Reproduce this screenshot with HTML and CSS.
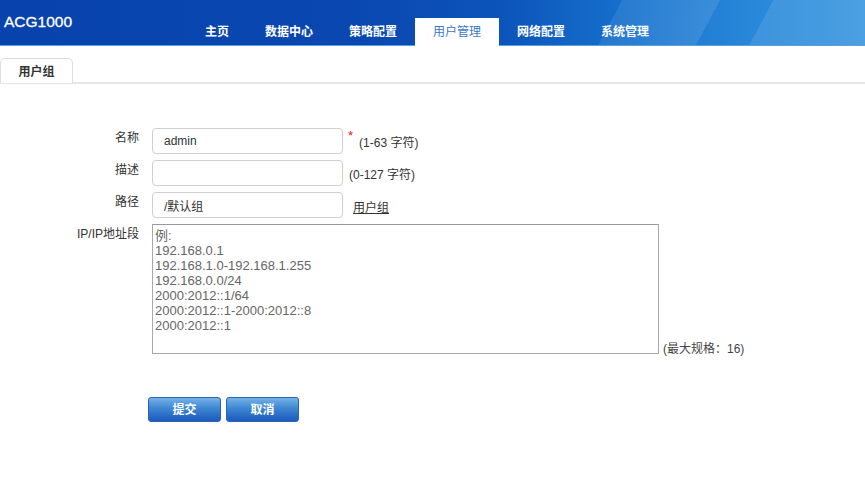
FILE: index.html
```html
<!DOCTYPE html>
<html lang="zh-CN">
<head>
<meta charset="utf-8">
<title>ACG1000</title>
<link rel="stylesheet" href="styles.css">
</head>
<body>
<header class="topbar">
  <div class="logo">ACG1000</div>
  <nav class="mainnav">
    <a class="nav-item">主页</a>
    <a class="nav-item">数据中心</a>
    <a class="nav-item">策略配置</a>
    <a class="nav-item active">用户管理</a>
    <a class="nav-item">网络配置</a>
    <a class="nav-item">系统管理</a>
  </nav>
</header>
<div class="tabbar">
  <div class="tab">用户组</div>
</div>
<main class="content">
  <form class="form">
    <div class="row">
      <label class="label">名称</label>
      <div class="field">
        <input class="input" type="text" value="admin">
        <span class="req">*</span>
        <span class="hint">(1-63 字符)</span>
      </div>
    </div>
    <div class="row">
      <label class="label">描述</label>
      <div class="field">
        <input class="input" type="text" value="">
        <span class="hint hint-gap">(0-127 字符)</span>
      </div>
    </div>
    <div class="row">
      <label class="label">路径</label>
      <div class="field">
        <input class="input" type="text" value="/默认组">
        <a class="link">用户组</a>
      </div>
    </div>
    <div class="row">
      <label class="label">IP/IP地址段</label>
      <div class="field field-bottom">
        <textarea class="area" placeholder="例:
192.168.0.1
192.168.1.0-192.168.1.255
192.168.0.0/24
2000:2012::1/64
2000:2012::1-2000:2012::8
2000:2012::1"></textarea>
        <span class="hint hint-max">(最大规格：16)</span>
      </div>
    </div>
    <div class="actions">
      <button type="button" class="btn">提交</button>
      <button type="button" class="btn">取消</button>
    </div>
  </form>
</main>
</body>
</html>
```
FILE: styles.css
```css
html, body {
  margin: 0;
  padding: 0;
  background: #ffffff;
  font-family: "Liberation Sans", "Noto Sans CJK SC", sans-serif;
  font-size: 12px;
  color: #333;
}

.topbar {
  height: 46px;
  display: flex;
  align-items: flex-end;
  background:
    linear-gradient(118deg, rgba(255,255,255,0) 0%, rgba(255,255,255,0) 70%, rgba(255,255,255,0.08) 70%, rgba(255,255,255,0.10) 81%, rgba(255,255,255,0) 81%, rgba(255,255,255,0) 87%, rgba(255,255,255,0.10) 87%),
    linear-gradient(90deg, #0843ad 0%, #0a47b0 40%, #0c54ba 58%, #1670cd 72%, #2786d8 86%, #3595de 100%);
  border-bottom: 1px solid #5aa0df;
  box-sizing: border-box;
}

.logo {
  align-self: flex-start;
  margin: 13px 0 0 4px;
  font-size: 15.5px;
  color: #fff;
  width: 183px;
  -webkit-text-stroke: 0.3px #fff;
}

.mainnav {
  display: flex;
  align-items: flex-end;
}

.nav-item {
  display: block;
  height: 27px;
  line-height: 28px;
  padding: 0 18px;
  color: #fff;
  font-size: 12px;
  font-weight: bold;
  cursor: pointer;
}

.nav-item.active {
  background: #fff;
  color: #3a78c8;
  font-weight: normal;
  padding: 0 18px;
  height: 28px;
  margin-bottom: -1px;
}

.tabbar {
  border-bottom: 2px solid #e6e6e6;
  display: flex;
  align-items: flex-end;
  box-sizing: border-box;
  height: 38px;
}

.tab {
  width: 71px;
  height: 24px;
  line-height: 27px;
  text-align: center;
  border: 1px solid #dcdcdc;
  border-bottom: none;
  border-radius: 5px 5px 0 0;
  font-weight: bold;
  color: #333;
  background: #fff;
  margin-bottom: -1px;
}

.content {
  padding-top: 44px;
}

.form {
  display: flex;
  flex-direction: column;
  gap: 6px;
}

.row {
  display: flex;
  align-items: flex-start;
}

.label {
  text-align: right;
  line-height: 20px;
  padding-right: 13px;
  box-sizing: border-box;
  width: 152px;
  color: #333;
}

.field {
  display: flex;
  align-items: center;
}

.field-bottom {
  align-items: flex-end;
}

.input {
  width: 191px;
  height: 26px;
  box-sizing: border-box;
  border: 1px solid #cfcfcf;
  border-radius: 4px;
  padding: 0 11px;
  font-family: "Liberation Sans", "Noto Sans CJK SC", sans-serif;
  font-size: 12px;
  color: #333;
  outline: none;
}

.req {
  color: #e02020;
  font-size: 13px;
  margin-left: 5px;
  align-self: flex-start;
  line-height: 16px;
}

.hint {
  color: #333;
  margin-left: 6px;
  font-size: 12px;
}

.hint-gap {
  margin-left: 6px;
}

.link {
  margin-left: 10px;
  color: #333;
  text-decoration: underline;
  cursor: pointer;
  margin-top: 2px;
}

.area {
  width: 507px;
  height: 130px;
  box-sizing: border-box;
  border: 1px solid #a9a9a9;
  border-top-color: #999;
  padding: 3px 2px;
  font-family: "Liberation Sans", "Noto Sans CJK SC", sans-serif;
  font-size: 13px;
  line-height: 15px;
  resize: none;
  outline: none;
  margin: 0;
  display: block;
}

.area::placeholder {
  color: #666;
  opacity: 1;
}

.hint-max {
  margin-left: 4px;
  line-height: 14px;
  margin-bottom: -2px;
  color: #444;
}

.actions {
  display: flex;
  gap: 5px;
  padding-left: 148px;
  margin-top: 37px;
}

.btn {
  width: 73px;
  height: 25px;
  border: 1px solid #2a62b8;
  border-radius: 3px;
  background: linear-gradient(#75b2e6 0%, #3d86d2 45%, #1d5abd 100%);
  color: #fff;
  font-family: "Liberation Sans", "Noto Sans CJK SC", sans-serif;
  font-size: 12px;
  font-weight: bold;
  padding: 0;
  line-height: 22px;
  cursor: pointer;
}
```
